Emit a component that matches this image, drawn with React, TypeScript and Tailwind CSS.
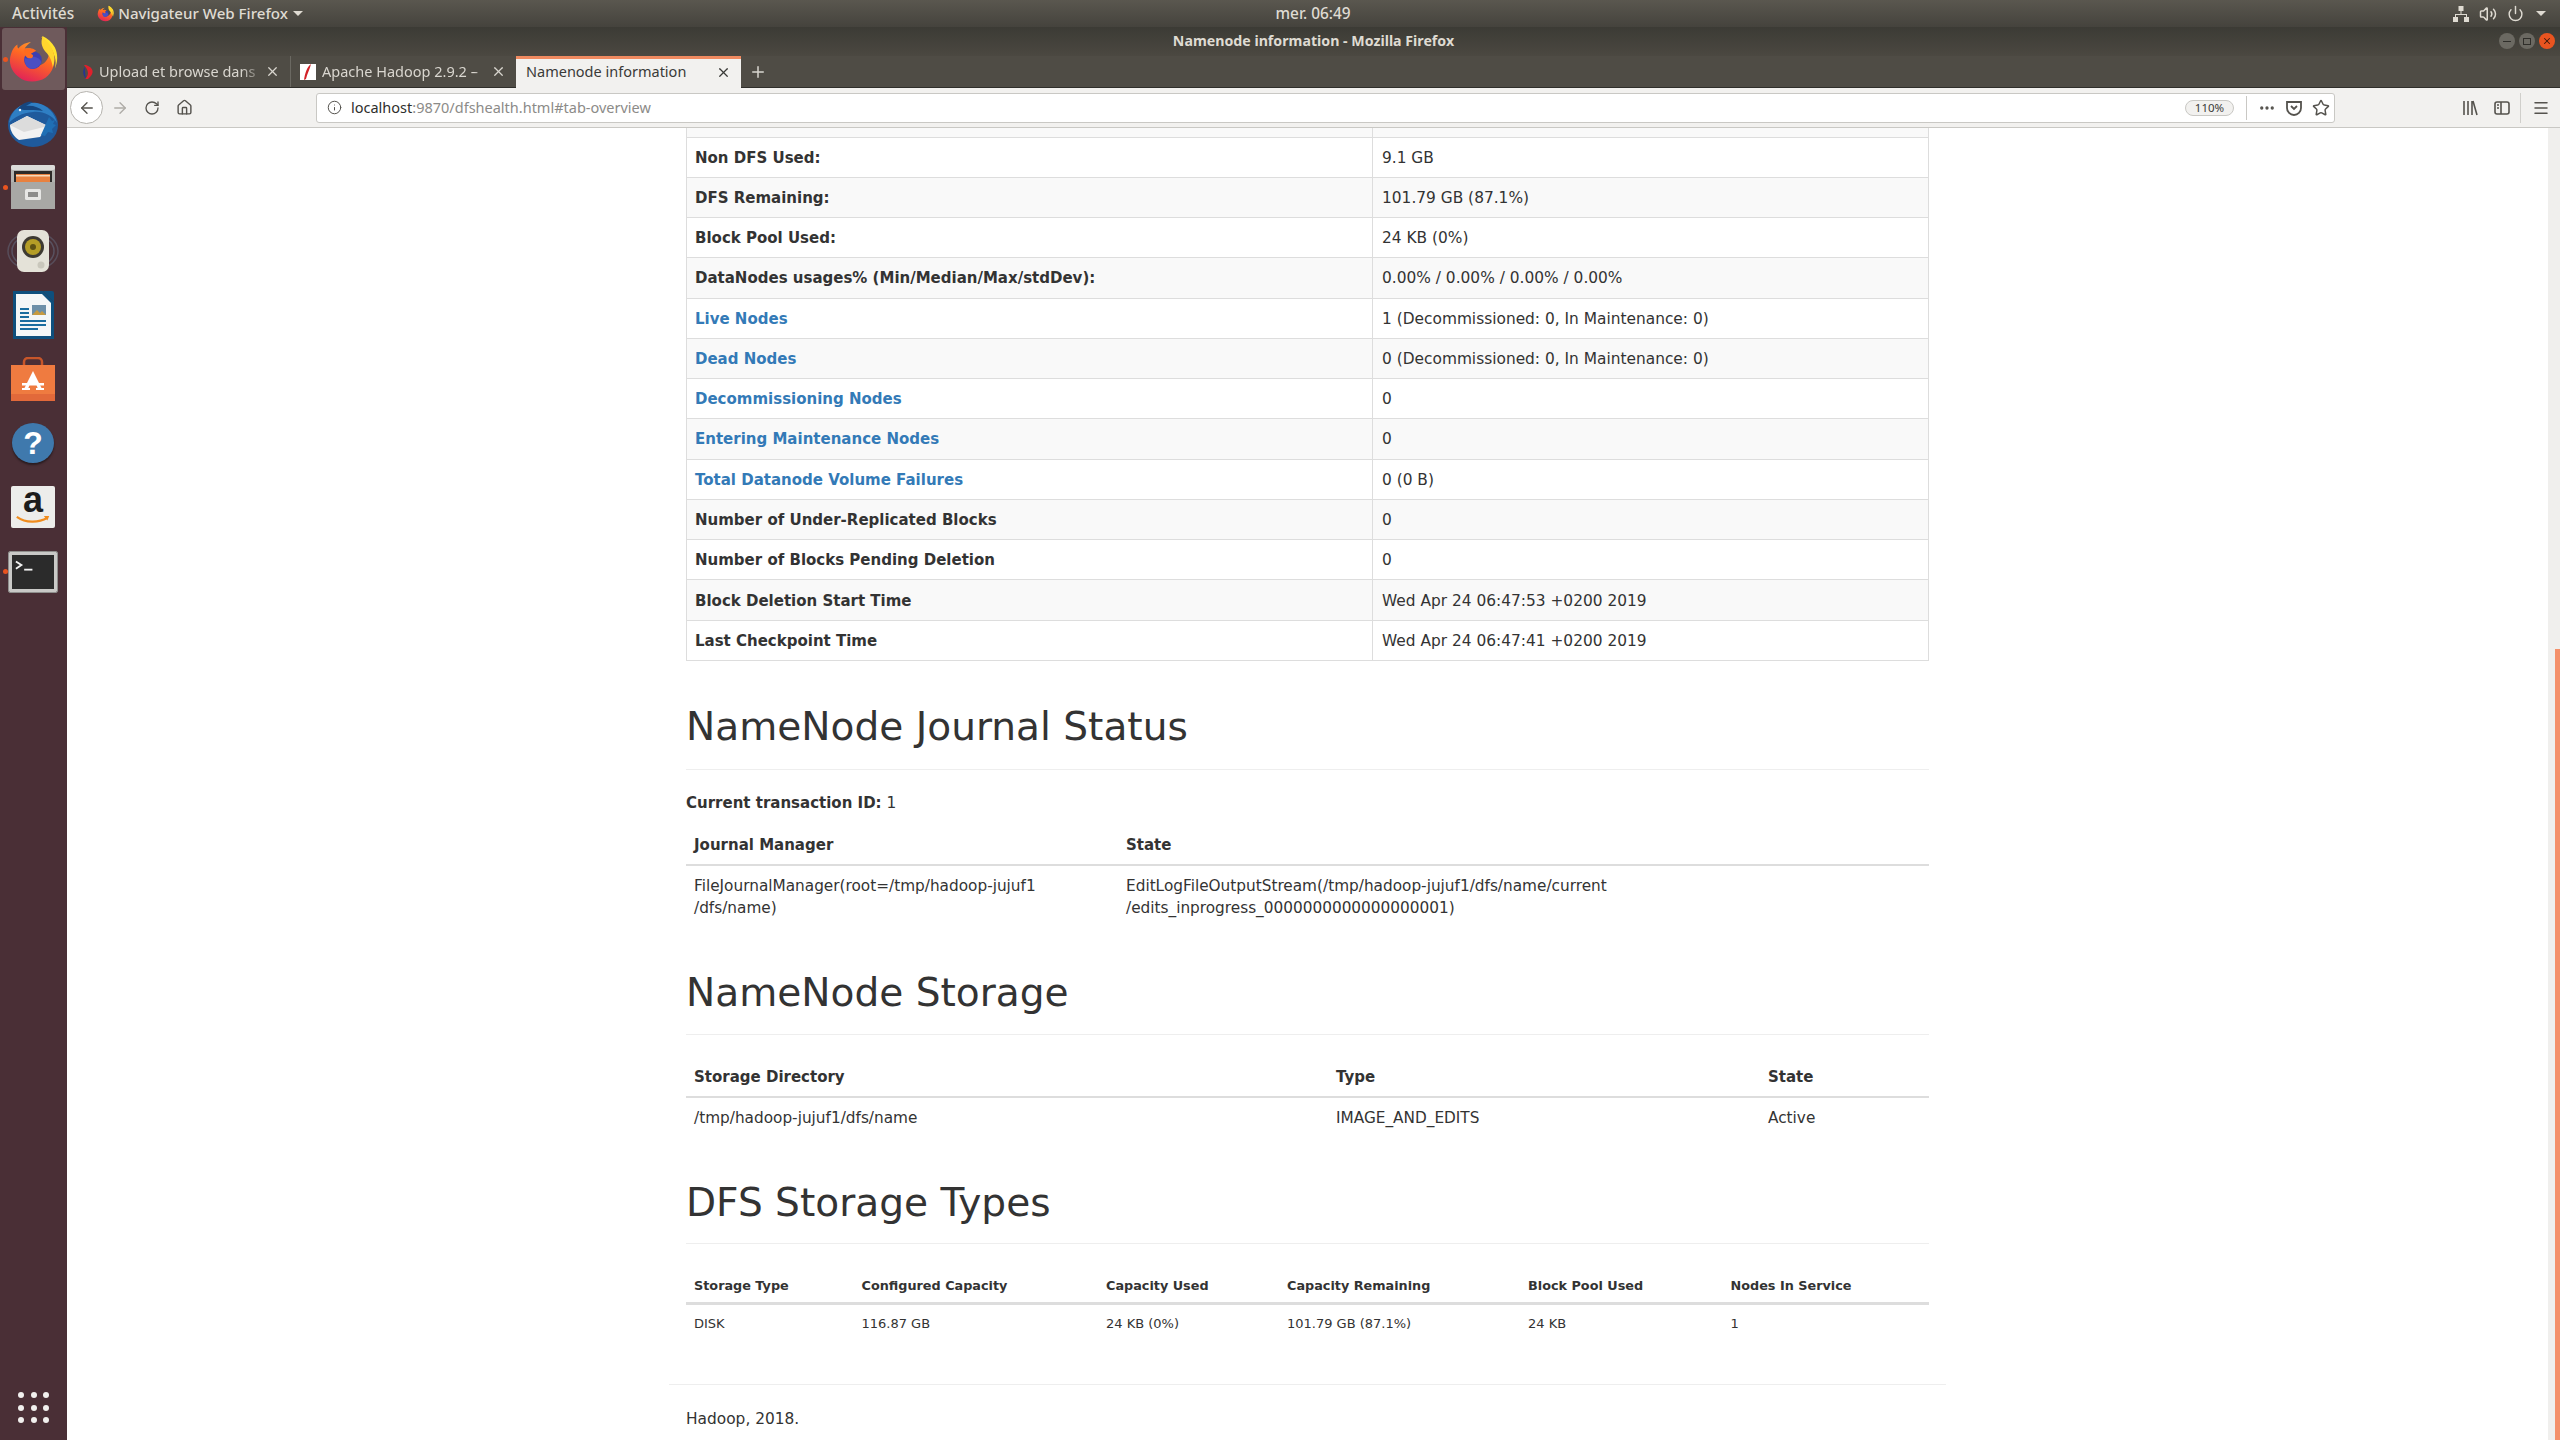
import { ArrowLeft, ArrowRight, Ellipsis, Home, Info, Menu, Plus, Power, RotateCw, Star, Volume2, X } from "lucide-react";

const overviewRows = [
  { label: "Non DFS Used:", value: "9.1 GB" },
  { label: "DFS Remaining:", value: "101.79 GB (87.1%)" },
  { label: "Block Pool Used:", value: "24 KB (0%)" },
  { label: "DataNodes usages% (Min/Median/Max/stdDev):", value: "0.00% / 0.00% / 0.00% / 0.00%" },
  { label: "Live Nodes", value: "1 (Decommissioned: 0, In Maintenance: 0)", link: true },
  { label: "Dead Nodes", value: "0 (Decommissioned: 0, In Maintenance: 0)", link: true },
  { label: "Decommissioning Nodes", value: "0", link: true },
  { label: "Entering Maintenance Nodes", value: "0", link: true },
  { label: "Total Datanode Volume Failures", value: "0 (0 B)", link: true },
  { label: "Number of Under-Replicated Blocks", value: "0" },
  { label: "Number of Blocks Pending Deletion", value: "0" },
  { label: "Block Deletion Start Time", value: "Wed Apr 24 06:47:53 +0200 2019" },
  { label: "Last Checkpoint Time", value: "Wed Apr 24 06:47:41 +0200 2019" },
];

const FirefoxIcon = ({ className }: { className: string }) => (
  <svg viewBox="0 0 48 48" className={className}>
    <defs>
      <linearGradient id="ffBody" x1="0.7" y1="0" x2="0.3" y2="1">
        <stop offset="0" stopColor="#ffb22e" />
        <stop offset="0.45" stopColor="#ff6a22" />
        <stop offset="1" stopColor="#e0205a" />
      </linearGradient>
    </defs>
    <path d="M33 2c-1 6 3 8 7 12 5 5 7 12 5 19 3-6 3-14 0-20C42 8 38 4 33 2z" fill="#ffe22e" />
    <path d="M33 3c3 5 9 8 11 16 2 9-1 18-8 23-8 5-19 5-26-1C3 36 0 27 3 19c1-4 3-7 6-9 0 2 0 3 1 4 3-4 8-6 12-6-3 2-5 4-6 6 7-1 9 2 9 2-4 0-5 2-6 3 3 3 8 1 11 4-2 5-10 3-13 1 2 5 8 8 14 6 5-2 9-7 8-13-1-7-5-11-7-14z" fill="url(#ffBody)" />
    <path d="M33 3c4 3 8 7 10 13 2 5 2 11 0 16-1-7-3-11-7-15-3-4-5-8-3-14z" fill="#ffd52e" />
    <circle cx="24" cy="25" r="8.5" fill="#3d3fb0" />
    <path d="M16 23c5 2 6-2 10-1 3 1 5 2 6 5-2 5-7 7-11 6-3-1-5-4-5-10z" fill="#4a4fc4" />
    <path d="M15 15c4-2 9-2 12 1l-5 3c2 1 3 2 1 4-3 1-7 0-8-8z" fill="#ff6b1f" />
  </svg>
);

const ThunderbirdIcon = () => (
  <svg viewBox="0 0 52 52" className="h-[52px] w-[52px]">
    <ellipse cx="26" cy="28" rx="25" ry="22" fill="#1f5a9c" />
    <path d="M2 26C4 12 16 4 30 6c10 2 18 10 20 20-5-8-14-12-24-11C15 16 7 20 2 26z" fill="#2f7fc4" />
    <path d="M11 12c4-6 10-8 15-7l-7 4c6-1 13 1 17 5-8-2-17 0-25-2z" fill="#16467f" />
    <path d="M3 28 20 19l21 10-8 11-21 3C7 40 3 34 3 28z" fill="#f2f2f2" />
    <path d="M3 28l14 7 24-6-21-10z" fill="#dcdcdc" />
    <path d="M34 38 42 20l3 4 3-1-2 4 3 1-4 4 1 4-5-1-3 4z" fill="#1f6fb5" />
    <circle cx="13" cy="13" r="1.2" fill="#eaf2fb" />
  </svg>
);

const FilesIcon = () => (
  <svg viewBox="0 0 44 44" className="h-[44px] w-[44px]">
    <rect x="0" y="0" width="44" height="44" rx="2" fill="#b3b3b0" />
    <rect x="0" y="0" width="44" height="5" rx="2" fill="#dcdcda" />
    <rect x="3" y="6" width="38" height="11" fill="#2d2a28" />
    <rect x="5" y="9" width="34" height="8" fill="#e8813f" />
    <rect x="5" y="10" width="34" height="1.5" fill="#f6d8b8" />
    <rect x="0" y="17" width="44" height="27" fill="#a8a8a5" />
    <rect x="14" y="24" width="16" height="11" rx="1.5" fill="#e6e6e4" />
    <rect x="17" y="27" width="10" height="5" fill="#8c8c8a" />
  </svg>
);

const SoundIcon = () => (
  <svg viewBox="0 0 52 44" className="h-[44px] w-[52px]">
    <ellipse cx="26" cy="22" rx="25" ry="19" fill="none" stroke="#5d5a6a" strokeWidth="1.5" opacity="0.7" />
    <ellipse cx="26" cy="22" rx="21" ry="16" fill="none" stroke="#5d5a6a" strokeWidth="1.5" opacity="0.8" />
    <rect x="10" y="1" width="32" height="42" rx="7" fill="#e4e2d8" />
    <circle cx="26" cy="18" r="11" fill="#3d3a32" />
    <circle cx="26" cy="18" r="8" fill="#b49d26" />
    <circle cx="26" cy="18" r="3" fill="#5e5214" />
    <circle cx="34" cy="36" r="3.5" fill="#c9c7bc" />
  </svg>
);

const WriterIcon = () => (
  <svg viewBox="0 0 42 48" className="h-[48px] w-[42px]">
    <path d="M1 0h30l11 11v37H1z" fill="#0e4f7d" />
    <path d="M4 3h26l9 9v33H4z" fill="#f4f6f7" />
    <path d="M31 0h9a2 2 0 0 1 2 2v9z" fill="#0e4f7d" />
    <rect x="8" y="17" width="9" height="2" fill="#1a6c9f" />
    <rect x="8" y="21" width="9" height="2" fill="#1a6c9f" />
    <rect x="8" y="25" width="9" height="2" fill="#1a6c9f" />
    <rect x="20" y="14" width="14" height="10" fill="#6d8fa8" />
    <path d="M20 24l5-5 3 3 2-2 4 4z" fill="#c79a3f" />
    <rect x="8" y="29" width="26" height="2" fill="#1a6c9f" />
    <rect x="8" y="33" width="26" height="2" fill="#1a6c9f" />
    <rect x="8" y="37" width="18" height="2" fill="#1a6c9f" />
  </svg>
);

const SoftwareIcon = () => (
  <svg viewBox="0 0 44 44" className="h-[44px] w-[44px]">
    <path d="M13 9V5a4 4 0 0 1 4-4h10a4 4 0 0 1 4 4v4" fill="none" stroke="#c7562a" strokeWidth="2.5" />
    <path d="M0 8h44v36H0z" fill="#ef7b40" />
    <path d="M0 37h44v7H0z" fill="#e2693a" />
    <path d="M22 14l9 18h-4l-1.500-4h-7L17 32h-4z" fill="#fff" />
    <rect x="11" y="26" width="22" height="2.5" fill="#fff" />
    <rect x="11" y="31" width="8" height="2" fill="#fff" />
    <rect x="25" y="31" width="8" height="2" fill="#fff" />
  </svg>
);

const HelpIcon = () => (
  <div className="flex h-[40px] w-[42px] items-center justify-center rounded-[50%] bg-[#3f79ad] font-['Liberation_Sans',sans-serif] text-[32px] font-bold text-white shadow-[0_2px_2px_#2a1c20]">
    ?
  </div>
);

const AmazonIcon = () => (
  <div className="flex h-[42px] w-[44px] flex-col items-center rounded-[2px] bg-[#ededeb]">
    <span className="mt-[-6px] font-['Liberation_Sans',sans-serif] text-[36px] leading-[40px] font-bold text-[#1c1c1c]">a</span>
    <svg viewBox="0 0 40 10" className="mt-[-5px] h-[9px] w-[38px]">
      <path d="M2 2c10 7 24 7 34 1" fill="none" stroke="#f08c1e" strokeWidth="2.4" />
      <path d="M32 1l6 0-2 5z" fill="#f08c1e" />
    </svg>
  </div>
);

const TerminalIcon = () => (
  <div className="mt-[2px] flex h-[40px] w-[48px] items-start rounded-[1px] border-[3px] border-[#c9c9c7] bg-[#2b2b2b] p-[3px] outline outline-1 outline-[#8f8f8d]">
    <svg viewBox="0 0 24 14" className="h-[16px] w-[22px]">
      <path d="M1 2l6 4-6 4" fill="none" stroke="#f2f2f2" strokeWidth="2" />
      <rect x="10" y="10" width="9" height="2" fill="#f2f2f2" />
    </svg>
  </div>
);

const dockItems = [
  { icon: <FirefoxIcon className="h-[50px] w-[50px]" />, running: true, active: true },
  { icon: <ThunderbirdIcon /> },
  { icon: <FilesIcon />, running: true },
  { icon: <SoundIcon /> },
  { icon: <WriterIcon /> },
  { icon: <SoftwareIcon /> },
  { icon: <HelpIcon /> },
  { icon: <AmazonIcon /> },
  { icon: <TerminalIcon />, running: true },
];

const Dock = () => (
  <div className="flex w-[67px] shrink-0 flex-col items-center bg-[#4a2f36]">
    <div className="flex w-full flex-col">
      {dockItems.map((item, i) => (
        <div key={i} className="relative flex h-[64px] items-center justify-center pr-[1px]">
          {item.active && <div className="absolute inset-x-[2px] inset-y-[1px] rounded-[3px] bg-[#6f5a5c]" />}
          {item.running && <div className="absolute left-[3px] h-[5px] w-[5px] rounded-full bg-[#e95420]" />}
          <div className="relative">{item.icon}</div>
        </div>
      ))}
    </div>
    <div className="mt-auto mb-[17px] grid grid-cols-3 gap-[6.5px]">
      {Array.from({ length: 9 }).map((_, i) => (
        <div key={i} className="h-[6px] w-[6px] rounded-full bg-[#f2f0ee]" />
      ))}
    </div>
  </div>
);

const TopPanel = () => (
  <div className="flex h-[27px] shrink-0 items-center bg-gradient-to-b from-[#5a574f] to-[#45433d] pr-[14px] pl-[12px] font-['Noto_Sans',sans-serif] text-[15.4px] font-medium text-[#dfdbd2]">
    <div className="flex flex-1 items-center">
      <span>Activités</span>
      <FirefoxIcon className="ml-[23px] h-[17px] w-[17px]" />
      <span className="ml-[4px] text-[15.1px]">Navigateur Web Firefox</span>
      <div className="mt-[1px] ml-[5px] h-0 w-0 border-x-[5px] border-t-[5px] border-x-transparent border-t-[#dfdbd2]" />
    </div>
    <span className="ml-[68px]">mer. 06:49</span>
    <div className="flex flex-1 items-center justify-end gap-[10px]">
      <svg viewBox="0 0 16 16" className="h-[16px] w-[16px]" fill="#dfdbd2">
        <rect x="5.5" y="0" width="5" height="5" />
        <rect x="0" y="11" width="5" height="5" />
        <rect x="11" y="11" width="5" height="5" />
        <path d="M7.500 5h1v3H14v3h-1V9H3v2H2V8h5.500z" />
      </svg>
      <Volume2 size={18} strokeWidth={2} />
      <Power size={17} strokeWidth={2} />
      <div className="ml-[2px] h-0 w-0 border-x-[5px] border-t-[5px] border-x-transparent border-t-[#dfdbd2]" />
    </div>
  </div>
);

const TitleBar = () => (
  <div className="relative flex h-[29px] shrink-0 items-center justify-center bg-gradient-to-b from-[#3c3b35] to-[#4b4841] pb-[1px] font-['Noto_Sans',sans-serif] text-[14.2px] font-bold text-[#dfdbd2]">
    Namenode information - Mozilla Firefox
    <div className="absolute top-[6px] right-[5px] flex gap-[4px]">
      <div className="flex h-[16px] w-[16px] items-center justify-center rounded-full bg-[#6b6962]">
        <div className="h-[1px] w-[8px] bg-[#2f2e2a]" />
      </div>
      <div className="flex h-[16px] w-[16px] items-center justify-center rounded-full bg-[#6b6962]">
        <div className="h-[7px] w-[8px] border border-[#2f2e2a]" />
      </div>
      <div className="flex h-[16px] w-[16px] items-center justify-center rounded-full bg-[#e95420]">
        <X size={10} strokeWidth={2.5} className="text-[#3c1a0c]" />
      </div>
    </div>
  </div>
);

const Tabs = () => (
  <div className="flex h-[32px] shrink-0 items-stretch border-b border-[#2f2e2a] bg-[#4f4c45] font-['Noto_Sans',sans-serif] text-[14.5px] text-[#d9d6cf]">
    <div className="flex w-[224px] items-center border-r border-[#6b6962] pr-[10px] pl-[15px]">
      <svg viewBox="0 0 16 16" className="h-[16px] w-[16px] shrink-0">
        <path d="M4 1c8 3 9 8 2 14l-3 0c5-5 3-9-1-14z" fill="#e0202c" />
        <path d="M3 3C0 7 1 11 4 15 3 10 3 7 3 3z" fill="#27348f" />
      </svg>
      <span className="ml-[1px] w-[166px] overflow-hidden whitespace-nowrap [mask-image:linear-gradient(to_left,transparent,black_24px)]">Upload et browse dans</span>
      <X size={15} className="ml-auto" />
    </div>
    <div className="flex w-[225px] items-center pr-[10px] pl-[9px]">
      <div className="flex h-[16px] w-[16px] shrink-0 items-center justify-center bg-white">
        <svg viewBox="0 0 16 16" className="h-[16px] w-[16px]">
          <path d="M11 0C7 3 5 9 4 16l2-1c1-5 4-10 5-15z" fill="#d22128" />
        </svg>
      </div>
      <span className="ml-[6px] w-[166px] overflow-hidden whitespace-nowrap [mask-image:linear-gradient(to_left,transparent,black_14px)]">Apache Hadoop 2.9.2 –</span>
      <X size={15} className="ml-auto" />
    </div>
    <div className="mb-[-1px] flex w-[225px] items-center border-t-[3px] border-[#f08a60] bg-[#f2f1ef] pr-[10px] pb-[3px] pl-[10px] text-[#3a3a38]">
      <span>Namenode information</span>
      <X size={15} className="ml-auto" />
    </div>
    <div className="flex w-[34px] items-center justify-center">
      <Plus size={18} />
    </div>
  </div>
);

const Toolbar = () => (
  <div className="flex h-[40px] shrink-0 items-center border-b border-[#c9c8c4] bg-[#f2f1ef] font-['Noto_Sans',sans-serif] text-[#55534e]">
    <div className="ml-[3px] flex h-[33px] w-[33px] items-center justify-center rounded-full border border-[#b5b3ae] bg-white">
      <ArrowLeft size={18} strokeWidth={1.8} />
    </div>
    <ArrowRight size={18} strokeWidth={1.8} className="ml-[8px] text-[#aeaca7]" />
    <RotateCw size={16} strokeWidth={2} className="ml-[15px]" />
    <Home size={17} strokeWidth={2} className="ml-[16px]" />
    <div className="ml-[123px] flex h-[30px] w-[2019px] items-center rounded-[3px] border border-[#c9c8c4] bg-white pr-[4px] pl-[10px] text-[14.5px]">
      <Info size={15} strokeWidth={1.6} />
      <span className="ml-[9px] text-[#2e2e2c]">localhost</span>
      <span className="text-[#8c8b88]">:9870/dfshealth.html#tab-overview</span>
      <div className="ml-auto flex h-[16px] w-[49px] items-center justify-center rounded-full border border-[#c9c8c4] bg-[#f2f1ef] text-[11.5px] text-[#3a3a38]">110%</div>
      <div className="mr-[11px] ml-[12px] h-[24px] w-px bg-[#c9c8c4]" />
      <Ellipsis size={18} strokeWidth={2.4} />
      <svg viewBox="0 0 16 16" className="ml-[10px] h-[16px] w-[16px]" fill="none" stroke="currentColor" strokeWidth="1.8">
        <path d="M1 2h14v6a7 7 0 0 1-14 0z" />
        <path d="M5 6l3 3 3-3" />
      </svg>
      <Star size={18} strokeWidth={2} className="ml-[10px]" />
    </div>
    <svg viewBox="0 0 16 16" className="ml-[127px] h-[16px] w-[16px]" fill="none" stroke="currentColor" strokeWidth="1.6">
      <path d="M2 1v14M6 1v14M10 1v14M11 1l4 14" />
    </svg>
    <svg viewBox="0 0 16 16" className="ml-[16px] h-[16px] w-[16px]" fill="none" stroke="currentColor" strokeWidth="1.6">
      <rect x="1" y="2" width="14" height="12" rx="2" />
      <path d="M7 2v12M3 5h2M3 8h2" />
    </svg>
    <div className="ml-[10px] h-[30px] w-px bg-[#d0cfcb]" />
    <Menu size={18} strokeWidth={2} className="ml-[11px]" />
  </div>
);

const Heading = ({ title, className }: { title: string; className: string }) => (
  <h2 className={`border-b border-[#eeeeee] text-[39.1px] leading-[44px] font-normal text-[#333333] ${className}`}>{title}</h2>
);

const OverviewTable = () => (
  <table className="w-full table-fixed border-collapse border-x border-b border-[#dddddd] text-[15.4px] leading-[22px] text-[#333333]">
    <colgroup>
      <col className="w-[686px]" />
      <col />
    </colgroup>
    <tbody>
      <tr className="h-[9px] border-b border-[#dddddd] bg-[#f9f9f9]">
        <td className="border-r border-[#dddddd]" />
        <td />
      </tr>
      {overviewRows.map((row, i) => (
        <tr key={row.label} className={`h-[40.28px] border-b border-[#dddddd] ${i % 2 === 1 ? "bg-[#f9f9f9]" : "bg-white"}`}>
          <td className={`border-r border-[#dddddd] px-[8px] pt-[1px] text-[15px] font-bold ${row.link ? "text-[#337ab7]" : ""}`}>{row.label}</td>
          <td className="px-[9px] pt-[1px]">{row.value}</td>
        </tr>
      ))}
    </tbody>
  </table>
);

const JournalTable = () => (
  <table className="mt-[11px] w-full table-fixed border-collapse text-[15.3px] leading-[22px] text-[#333333]">
    <colgroup>
      <col className="w-[432px]" />
      <col />
    </colgroup>
    <thead>
      <tr className="h-[40px] border-b-[2px] border-[#dddddd] text-left text-[15px]">
        <th className="px-[8px] pt-[1px]">Journal Manager</th>
        <th className="px-[8px] pt-[1px]">State</th>
      </tr>
    </thead>
    <tbody>
      <tr>
        <td className="px-[8px] py-[9px]">
          FileJournalManager(root=/tmp/hadoop-jujuf1
          <br />
          /dfs/name)
        </td>
        <td className="px-[8px] py-[9px]">
          EditLogFileOutputStream(/tmp/hadoop-jujuf1/dfs/name/current
          <br />
          /edits_inprogress_0000000000000000001)
        </td>
      </tr>
    </tbody>
  </table>
);

const StorageTable = () => (
  <table className="mt-[22px] w-full table-fixed border-collapse text-[15.3px] leading-[22px] text-[#333333]">
    <colgroup>
      <col className="w-[642px]" />
      <col className="w-[432px]" />
      <col />
    </colgroup>
    <thead>
      <tr className="h-[40px] border-b-[2px] border-[#dddddd] text-left text-[15px]">
        <th className="px-[8px] pt-[1px]">Storage Directory</th>
        <th className="px-[8px] pt-[1px]">Type</th>
        <th className="px-[8px] pt-[1px]">State</th>
      </tr>
    </thead>
    <tbody>
      <tr>
        <td className="px-[8px] py-[9px]">/tmp/hadoop-jujuf1/dfs/name</td>
        <td className="px-[8px] py-[9px]">IMAGE_AND_EDITS</td>
        <td className="px-[8px] py-[9px]">Active</td>
      </tr>
    </tbody>
  </table>
);

const TypesTable = () => (
  <table className="mt-[24px] w-full table-fixed border-collapse text-[13px] leading-[18px] text-[#333333]">
    <colgroup>
      <col className="w-[167.5px]" />
      <col className="w-[244.5px]" />
      <col className="w-[181px]" />
      <col className="w-[241px]" />
      <col className="w-[202.5px]" />
      <col />
    </colgroup>
    <thead>
      <tr className="h-[36px] border-b-[3px] border-[#dddddd] text-left text-[12.8px]">
        <th className="px-[8px] pt-[1px]">Storage Type</th>
        <th className="px-[8px] pt-[1px]">Configured Capacity</th>
        <th className="px-[8px] pt-[1px]">Capacity Used</th>
        <th className="px-[8px] pt-[1px]">Capacity Remaining</th>
        <th className="px-[8px] pt-[1px]">Block Pool Used</th>
        <th className="px-[8px] pt-[1px]">Nodes In Service</th>
      </tr>
    </thead>
    <tbody>
      <tr>
        <td className="px-[8px] pt-[10px] pb-[8px]">DISK</td>
        <td className="px-[8px] pt-[10px] pb-[8px]">116.87 GB</td>
        <td className="px-[8px] pt-[10px] pb-[8px]">24 KB (0%)</td>
        <td className="px-[8px] pt-[10px] pb-[8px]">101.79 GB (87.1%)</td>
        <td className="px-[8px] pt-[10px] pb-[8px]">24 KB</td>
        <td className="px-[8px] pt-[10px] pb-[8px]">1</td>
      </tr>
    </tbody>
  </table>
);

const Page = () => (
  <div className="flex min-h-0 flex-1 bg-white">
    <div className="flex min-w-0 flex-1 justify-center overflow-hidden">
      <div className="w-[1243px] shrink-0">
        <OverviewTable />
        <Heading title="NameNode Journal Status" className="mt-[44px] pb-[20px]" />
        <p className="mt-[22px] text-[15.4px] leading-[22px] text-[#333333]">
          <b className="text-[15px]">Current transaction ID:</b> 1
        </p>
        <JournalTable />
        <Heading title="NameNode Storage" className="mt-[43px] pb-[19px]" />
        <StorageTable />
        <Heading title="DFS Storage Types" className="mt-[43px] pb-[18px]" />
        <TypesTable />
        <hr className="mx-[-17px] mt-[43px] border-[#eeeeee]" />
        <p className="mt-[23px] text-[15.4px] leading-[22px] text-[#333333]">Hadoop, 2018.</p>
      </div>
    </div>
    {/* scrollbar */}
    <div className="flex w-[12px] shrink-0 flex-col justify-end bg-[#f0efed]">
      <div className="ml-auto h-[791px] w-[5px] bg-[#f4906a]" />
    </div>
  </div>
);

export default function App() {
  return (
    <div className="flex h-[1440px] w-[2560px] flex-col overflow-hidden bg-white font-['DejaVu_Sans',sans-serif]">
      <TopPanel />
      <div className="flex min-h-0 flex-1">
        <Dock />
        <div className="flex min-w-0 flex-1 flex-col">
          <TitleBar />
          <Tabs />
          <Toolbar />
          <Page />
        </div>
      </div>
    </div>
  );
}
